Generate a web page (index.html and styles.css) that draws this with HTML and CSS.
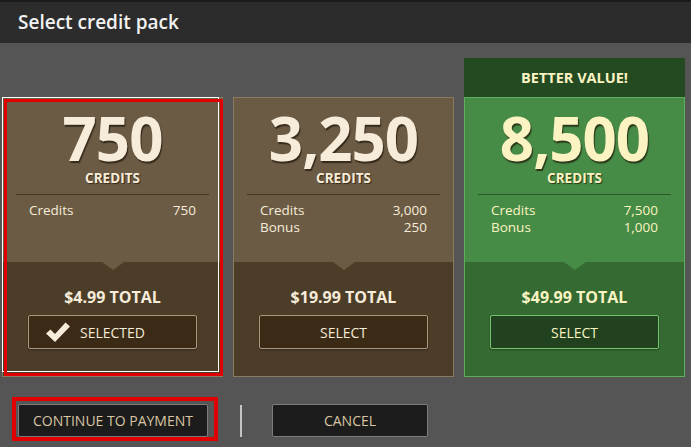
FILE: index.html
```html
<!DOCTYPE html>
<html lang="en">
<head>
    <meta charset="UTF-8">
    <title>Select credit pack</title>
    <link rel="stylesheet" href="styles.css">
</head>
<body>
    <div class="dialog">
        <div class="dialog-header">Select credit pack</div>

        <div class="packs">
            <div class="pack selected">
                <div class="pack-top">
                    <div class="pack-amount">750</div>
                    <div class="pack-unit">CREDITS</div>
                    <div class="pack-divider"></div>
                    <div class="pack-row"><span>Credits</span><span>750</span></div>
                </div>
                <div class="pack-bottom">
                    <div class="pack-price">$4.99 TOTAL</div>
                    <button class="pack-button">
                        <svg class="check" width="26" height="22" viewBox="0 0 26 22">
                            <path d="M1 12.5 L5.5 8.5 L10 13 L20.5 1.5 L25 5.5 L10 21 Z" fill="#f6ecd9"/>
                        </svg>
                        SELECTED
                    </button>
                </div>
                <div class="ring-white"></div>
                <div class="ring-red"></div>
            </div>

            <div class="pack">
                <div class="pack-top">
                    <div class="pack-amount">3,250</div>
                    <div class="pack-unit">CREDITS</div>
                    <div class="pack-divider"></div>
                    <div class="pack-row"><span>Credits</span><span>3,000</span></div>
                    <div class="pack-row"><span>Bonus</span><span>250</span></div>
                </div>
                <div class="pack-bottom">
                    <div class="pack-price">$19.99 TOTAL</div>
                    <button class="pack-button">SELECT</button>
                </div>
            </div>

            <div class="pack-wrap">
                <div class="pack-flag">BETTER VALUE!</div>
                <div class="pack green">
                    <div class="pack-top">
                        <div class="pack-amount">8,500</div>
                        <div class="pack-unit">CREDITS</div>
                        <div class="pack-divider"></div>
                        <div class="pack-row"><span>Credits</span><span>7,500</span></div>
                        <div class="pack-row"><span>Bonus</span><span>1,000</span></div>
                    </div>
                    <div class="pack-bottom">
                        <div class="pack-price">$49.99 TOTAL</div>
                        <button class="pack-button">SELECT</button>
                    </div>
                </div>
            </div>
        </div>

        <div class="actions">
            <button class="action-button continue">CONTINUE TO PAYMENT<span class="ring-red"></span></button>
            <div class="actions-sep"></div>
            <button class="action-button cancel">CANCEL</button>
        </div>
    </div>
</body>
</html>
```

FILE: styles.css
```css
body {
    margin: 0;
    background-color: #555555;
    font-family: 'Open Sans', 'Liberation Sans', sans-serif;
    overflow: hidden;
}
.dialog {
    width: 691px;
    height: 447px;
}
.dialog-header {
    height: 41px;
    line-height: 41px;
    border-top: 2px solid #1b1b1b;
    background-color: #2c2c2c;
    color: #f2f2f2;
    font-size: 19px;
    font-weight: 600;
    padding-left: 18px;
}
.packs {
    display: flex;
    align-items: flex-end;
    gap: 10px;
    padding: 15px 0 0 2px;
}
.pack-wrap {
    width: 221px;
}
.pack-flag {
    height: 39px;
    line-height: 39px;
    background-color: #244a22;
    color: #fbf4c2;
    font-size: 14.5px;
    font-weight: 700;
    text-align: center;
}
.pack {
    position: relative;
    width: 221px;
    height: 280px;
    box-sizing: border-box;
    border: 1px solid #8a7a5f;
    color: #f6ecd9;
    display: flex;
    flex-direction: column;
}
.pack-top {
    height: 164px;
    box-sizing: border-box;
    padding-top: 12px;
    background-color: #6b5b45;
    text-align: center;
}
.pack-amount {
    font-size: 60px;
    line-height: 56px;
    font-weight: 700;
    letter-spacing: -1px;
    text-shadow: 1px 2px 1px rgba(30, 20, 5, 0.7);
}
.pack-unit {
    margin-top: 4px;
    font-size: 13.5px;
    line-height: 16px;
    font-weight: 700;
    text-shadow: 1px 1px 1px rgba(30, 20, 5, 0.7);
}
.pack-divider {
    margin: 8px 13px 7px;
    height: 1px;
    background-color: #45382a;
}
.pack-row {
    display: flex;
    justify-content: space-between;
    padding: 0 26px;
    font-size: 13.5px;
    line-height: 17px;
}
.pack-bottom {
    position: relative;
    flex: 1;
    background-color: #4c3d29;
    padding-top: 25px;
    text-align: center;
}
.pack-bottom::before {
    content: '';
    position: absolute;
    top: 0;
    left: 50%;
    margin-left: -11px;
    border-left: 11px solid transparent;
    border-right: 11px solid transparent;
    border-top: 8px solid #6b5b45;
}
.pack-price {
    font-size: 16px;
    line-height: 20px;
    font-weight: 700;
}
.pack-button {
    position: relative;
    display: block;
    margin: 8px auto 0;
    width: 169px;
    height: 34px;
    box-sizing: border-box;
    background-color: #3a2a16;
    border: 1px solid #a8987a;
    border-radius: 2px;
    color: #f6ecd9;
    font-family: inherit;
    font-size: 14px;
    padding: 0;
    box-shadow: 0 1px 2px rgba(0, 0, 0, 0.35);
}
.check {
    position: absolute;
    left: 16px;
    top: 5px;
}
.pack.green {
    border-color: #5eae5b;
    color: #fbf4c2;
}
.green .pack-top {
    background-color: #468b46;
}
.green .pack-divider {
    background-color: #2b5a2a;
}
.green .pack-bottom {
    background-color: #356a33;
}
.green .pack-bottom::before {
    border-top-color: #468b46;
}
.green .pack-button {
    background-color: #21411f;
    border-color: #74c46c;
    color: #fbf4c2;
}
.ring-white {
    position: absolute;
    top: -1px;
    left: -1px;
    right: 3px;
    bottom: 4px;
    border: 1px solid #ffffff;
    pointer-events: none;
}
.ring-red {
    position: absolute;
    top: 1px;
    left: 1px;
    right: -1px;
    bottom: 0;
    border: 3px solid #e00000;
    pointer-events: none;
}
.actions {
    display: flex;
    align-items: center;
    padding: 27px 0 0 18px;
}
.action-button {
    position: relative;
    height: 33px;
    box-sizing: border-box;
    background-color: #1c1c1c;
    border: 1px solid #7c7c7c;
    border-radius: 2px;
    color: #d8c5a2;
    font-family: inherit;
    font-size: 14px;
    padding: 0;
}
.action-button.continue {
    width: 190px;
}
.action-button.continue .ring-red {
    top: -8px;
    left: -7px;
    right: -11px;
    bottom: -5px;
    border-width: 4px;
}
.actions-sep {
    width: 2px;
    height: 32px;
    margin: 0 30px 0 32px;
    background-color: #c4c4c4;
}
.action-button.cancel {
    width: 156px;
}
```
